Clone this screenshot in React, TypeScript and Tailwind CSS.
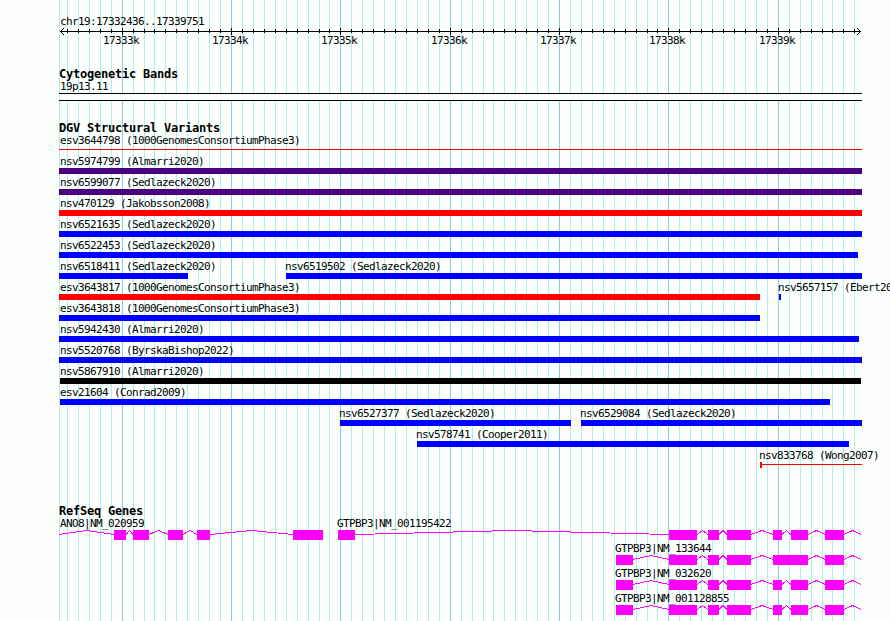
// Region overview: ruler, cytogenetic band, structural variants and genes
const START = 17332436;
const END = 17339751;
const LEFT = 59;
const RIGHT = 862;

const toX = (pos: number) => Math.round(60 + ((pos - START) * 800) / (END - START + 1));

const ticks = Array.from({ length: 73 }, (_, i) => {
  const pos = 17332500 + i * 100;
  return { pos, x: toX(pos), major: pos % 1000 === 0 };
});

type Variant = {
  name: string;
  start?: number;
  end?: number;
  color: string;
  shape?: "line" | "anchored";
};

const variantRows: Variant[][] = [
  [{ name: "esv3644798 (1000GenomesConsortiumPhase3)", color: "fill-[#ff0000]", shape: "line" }],
  [{ name: "nsv5974799 (Almarri2020)", color: "fill-[#4b0082]" }],
  [{ name: "nsv6599077 (Sedlazeck2020)", color: "fill-[#4b0082]" }],
  [{ name: "nsv470129 (Jakobsson2008)", color: "fill-[#ff0000]" }],
  [{ name: "nsv6521635 (Sedlazeck2020)", color: "fill-[#0000ff]" }],
  [{ name: "nsv6522453 (Sedlazeck2020)", end: 858, color: "fill-[#0000ff]" }],
  [
    { name: "nsv6518411 (Sedlazeck2020)", end: 188, color: "fill-[#0000ff]" },
    { name: "nsv6519502 (Sedlazeck2020)", start: 286, color: "fill-[#0000ff]" },
  ],
  [
    { name: "esv3643817 (1000GenomesConsortiumPhase3)", end: 760, color: "fill-[#ff0000]" },
    { name: "nsv5657157 (Ebert2021)", start: 779, end: 781, color: "fill-[#0000ff]" },
  ],
  [{ name: "esv3643818 (1000GenomesConsortiumPhase3)", end: 760, color: "fill-[#0000ff]" }],
  [{ name: "nsv5942430 (Almarri2020)", end: 859, color: "fill-[#0000ff]" }],
  [{ name: "nsv5520768 (ByrskaBishop2022)", color: "fill-[#0000ff]" }],
  [{ name: "nsv5867910 (Almarri2020)", start: 60, end: 861, color: "fill-black" }],
  [{ name: "esv21604 (Conrad2009)", start: 60, end: 830, color: "fill-[#0000ff]" }],
  [
    { name: "nsv6527377 (Sedlazeck2020)", start: 340, end: 571, color: "fill-[#0000ff]" },
    { name: "nsv6529084 (Sedlazeck2020)", start: 581, color: "fill-[#0000ff]" },
  ],
  [{ name: "nsv578741 (Cooper2011)", start: 417, end: 849, color: "fill-[#0000ff]" }],
  [{ name: "nsv833768 (Wong2007)", start: 760, color: "fill-[#ff0000]", shape: "anchored" }],
];

type Exon = [number, number];
type Gene = { name: string; start: number; end: number; exons: Exon[] };

const tail: Exon[] = [[669, 697], [708, 719], [727, 751], [773, 782], [791, 808], [825, 844]];

const geneRows: Gene[][] = [
  [
    {
      name: "ANO8|NM_020959",
      start: 59,
      end: 323,
      exons: [[114, 126], [133, 149], [168, 183], [197, 210], [293, 323]],
    },
    { name: "GTPBP3|NM_001195422", start: 338, end: 861, exons: [[338, 355], ...tail] },
  ],
  [
    {
      name: "GTPBP3|NM_133644",
      start: 616,
      end: 861,
      exons: [[616, 633], [669, 697], [708, 719], [727, 751], [773, 808], [825, 844]],
    },
  ],
  [{ name: "GTPBP3|NM_032620", start: 616, end: 861, exons: [[616, 633], ...tail] }],
  [{ name: "GTPBP3|NM_001128855", start: 616, end: 861, exons: [[616, 633], ...tail] }],
];

const labelX = (start: number) => Math.max(60, start - 1);

function TrackTitle({ children }: { children: string }) {
  return <h2 className="pl-[59px] text-[12px] leading-3 font-bold tracking-[-0.224px]">{children}</h2>;
}

function Grid() {
  return (
    <svg className="absolute inset-0" width="890" height="621" shapeRendering="crispEdges">
      <rect x={LEFT} y="0" width="1" height="621" fill="#afeeee" />
      {ticks.map((t) => (
        <rect key={t.pos} x={t.x} y="0" width="1" height="621" fill={t.major ? "#87ceeb" : "#afeeee"} />
      ))}
    </svg>
  );
}

function Ruler() {
  return (
    <header className="flex flex-col pt-[15px]">
      <p className="pl-[60px]">chr19:17332436..17339751</p>
      <svg className="block" width="890" height="20" shapeRendering="crispEdges">
        <rect x="60" y="3" width="801" height="1" />
        {ticks.map((t) => (
          <rect key={t.pos} x={t.x} y={t.major ? 0 : 1} width="1" height={t.major ? 7 : 4} />
        ))}
        {[1, 2, 3].map((d) => (
          <g key={d}>
            <rect x={60 + d} y={3 - d} width="1" height="1" />
            <rect x={60 + d} y={3 + d} width="1" height="1" />
            <rect x={860 - d} y={3 - d} width="1" height="1" />
            <rect x={860 - d} y={3 + d} width="1" height="1" />
          </g>
        ))}
        {ticks
          .filter((t) => t.major)
          .map((t) => (
            <text key={t.pos} x={t.x - 19} y="16">
              {`${t.pos / 1000}k`}
            </text>
          ))}
      </svg>
    </header>
  );
}

function VariantGlyph({ variant }: { variant: Variant }) {
  const { name, start = LEFT, end = RIGHT, color, shape } = variant;
  const thin = shape !== undefined;

  return (
    <g>
      <rect
        className={color}
        x={start}
        y={thin ? 15 : 13}
        width={end - start}
        height={thin ? 1 : 6}
      />
      {shape === "anchored" && <rect className={color} x={start} y="13" width="2" height="6" />}
      <text x={labelX(start)} y="10">
        {name}
      </text>
    </g>
  );
}

function GeneGlyph({ gene }: { gene: Gene }) {
  // introns are the gaps between exons, drawn as hats
  const introns: Exon[] = [];
  let prev = gene.start;
  for (const [from, to] of gene.exons) {
    if (from > prev) introns.push([prev, from]);
    prev = to;
  }
  if (prev < gene.end) introns.push([prev, gene.end]);

  return (
    <g>
      {introns.map(([a, b]) => (
        <polyline
          key={a}
          points={`${a},17.5 ${(a + b) / 2},13.5 ${b},17.5`}
          fill="none"
          stroke="#ff00ff"
          strokeWidth="1"
        />
      ))}
      {gene.exons.map(([a, b]) => (
        <rect key={a} x={a} y="13" width={b - a} height="10" fill="#ff00ff" />
      ))}
      <text x={labelX(gene.start)} y="10">
        {gene.name}
      </text>
    </g>
  );
}

export default function App() {
  return (
    <main className="relative h-[621px] w-[890px] overflow-hidden bg-[#fdfffc] font-['DejaVu_Sans_Mono',monospace] text-[11px] leading-[13px] tracking-[-0.622px] text-black">
      <Grid />
      <div className="relative flex flex-col">
        <Ruler />

        <section className="flex flex-col pt-5">
          <TrackTitle>Cytogenetic Bands</TrackTitle>
          <p className="pl-[60px]">19p13.11</p>
          <div className="ml-[59px] h-2 w-[803px] border-y border-black bg-[#fdfffc]" />
        </section>

        <section className="flex flex-col pt-[21px]">
          <TrackTitle>DGV Structural Variants</TrackTitle>
          {variantRows.map((row) => (
            <svg key={row[0].name} className="block" width="890" height="21" shapeRendering="crispEdges">
              {row.map((v) => (
                <VariantGlyph key={v.name} variant={v} />
              ))}
            </svg>
          ))}
        </section>

        <section className="flex flex-col pt-[35px]">
          <TrackTitle>RefSeq Genes</TrackTitle>
          {geneRows.map((row) => (
            <svg key={row[0].name} className="block" width="890" height="25" shapeRendering="crispEdges">
              {row.map((g) => (
                <GeneGlyph key={g.name} gene={g} />
              ))}
            </svg>
          ))}
        </section>
      </div>
    </main>
  );
}
